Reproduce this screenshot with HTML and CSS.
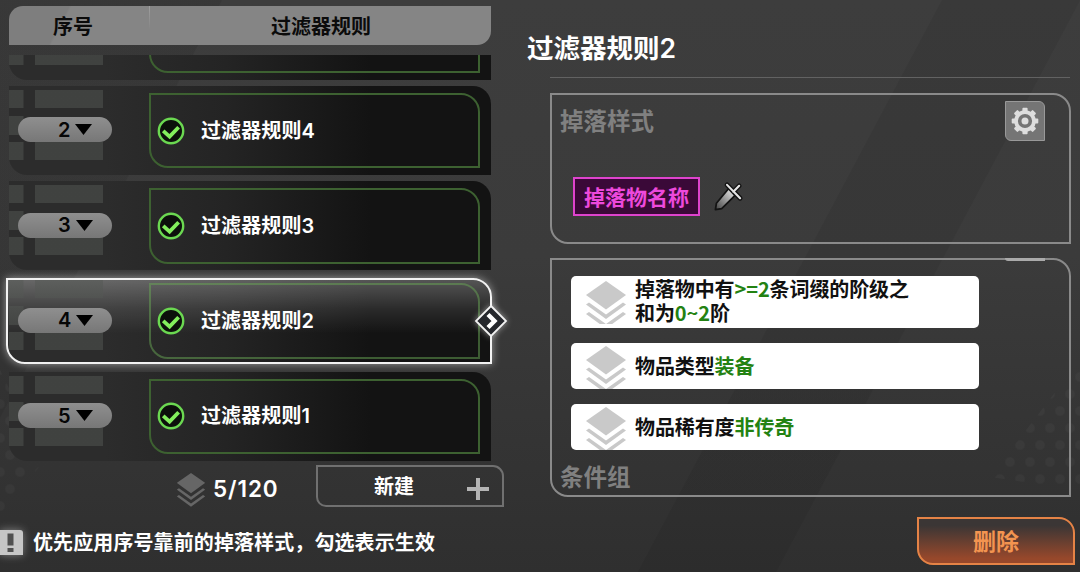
FILE: index.html
```html
<!DOCTYPE html>
<html lang="zh-CN">

<head>
  <meta charset="utf-8">
  <meta name="viewport" content="width=device-width, initial-scale=1.0">
  <title>过滤器规则</title>
  <link rel="stylesheet" href="styles.css">
</head>

<body>
  <svg class="defs" width="0" height="0">
    <symbol id="layers" viewBox="0 0 40 48" preserveAspectRatio="xMidYMin slice">
      <path d="M20 0L40 14L20 28.5L0 14Z" />
      <path d="M0 23.5L3 21.5L20 33.5L37 21.5L40 23.5L20 38Z" />
      <path d="M0 33L3 31L20 43L37 31L40 33L20 47.5Z" />
    </symbol>
    <symbol id="check" viewBox="0 0 28 28">
      <circle cx="14" cy="14" r="12.2" fill="#0c100b" stroke="#6bd851" stroke-width="2.4" />
      <path d="M6.2 13.8L12.6 19.6L21.6 10.2" fill="none" stroke="#82ee5c" stroke-width="3.8" />
    </symbol>
    <symbol id="down" viewBox="0 0 17 11">
      <path d="M0 0H17L8.5 11Z" />
    </symbol>
  </svg>
  <div class="dots dots_left"></div>
  <div class="dots dots_right"></div>

  <div id="rules">
    <div class="head">
      <div class="head_no">序号</div>
      <div class="head_name">过滤器规则</div>
    </div>
    <div class="list">
      <div class="row">
        <div class="order"></div>
        <div class="name"></div>
      </div>
      <div class="row">
        <div class="order"><div class="pill">2<svg class="down"><use href="#down" /></svg></div></div>
        <div class="name"><svg class="check"><use href="#check" /></svg>过滤器规则4</div>
      </div>
      <div class="row">
        <div class="order"><div class="pill">3<svg class="down"><use href="#down" /></svg></div></div>
        <div class="name"><svg class="check"><use href="#check" /></svg>过滤器规则3</div>
      </div>
      <div class="row selected">
        <div class="order"><div class="pill">4<svg class="down"><use href="#down" /></svg></div></div>
        <div class="name"><svg class="check"><use href="#check" /></svg>过滤器规则2</div>
        <svg class="arrow" viewBox="0 0 34 34">
          <path d="M17 2L32 17L17 32L2 17Z" fill="#25272c" stroke="#f2f2f2" stroke-width="1.8" />
          <path d="M14 10.5L20.5 17L14 23.5" fill="none" stroke="#fff" stroke-width="4.4" />
        </svg>
      </div>
      <div class="row">
        <div class="order"><div class="pill">5<svg class="down"><use href="#down" /></svg></div></div>
        <div class="name"><svg class="check"><use href="#check" /></svg>过滤器规则1</div>
      </div>
    </div>
    <div class="tools">
      <svg class="count_icon"><use href="#layers" /></svg>
      <span class="count">5/120</span>
      <div class="new">
        <span>新建</span>
        <svg width="22" height="22" viewBox="0 0 22 22"><path d="M9 0H13V9H22V13H13V22H9V13H0V9H9Z" fill="#b4b4b4" /></svg>
      </div>
    </div>
    <div class="note">
      <svg class="warn" viewBox="0 0 23 25">
        <path d="M0 0H20Q23 0 23 3V25H0Z" fill="#c6c6c6" />
        <path d="M7.5 3.5H13.5V15.5H7.5ZM7.5 18H13.5V22H7.5Z" fill="#505050" />
      </svg>
      <span>优先应用序号靠前的掉落样式，勾选表示生效</span>
    </div>
  </div>

  <div id="detail">
    <h1>过滤器规则2</h1>
    <div class="panel style_panel">
      <div class="panel_top">
        <h2>掉落样式</h2>
        <div class="gear">
          <svg width="28" height="28" viewBox="-14 -14 28 28">
            <g fill="#dedede">
              <rect id="tooth" x="-2.6" y="-13.3" width="5.2" height="26.6" rx="1" />
              <use href="#tooth" transform="rotate(45)" />
              <use href="#tooth" transform="rotate(90)" />
              <use href="#tooth" transform="rotate(135)" />
              <circle r="10.8" />
            </g>
            <circle r="5.3" fill="#dedede" stroke="#757575" stroke-width="3.6" />
          </svg>
        </div>
      </div>
      <div class="drop">
        <span class="tag">掉落物名称</span>
        <svg class="sword" viewBox="0 0 32 32">
          <defs>
            <linearGradient id="blade" x1="0" y1="1" x2="1" y2="0">
              <stop offset="0" stop-color="#404040" />
              <stop offset="0.5" stop-color="#9a9a9a" />
              <stop offset="1" stop-color="#f4f4f4" />
            </linearGradient>
          </defs>
          <path d="M14.5 4L28 17.8M21 11L27 5" stroke="#131313" stroke-width="5" stroke-linecap="round" />
          <path d="M2.5 29.5L3.5 23L16 8L22.5 15L9 28.5Z" fill="url(#blade)" stroke="#131313" stroke-width="1.8" stroke-linejoin="round" />
          <path d="M14.5 4L28 17.8M21 11L27 5" stroke="#e6e6e6" stroke-width="2.2" stroke-linecap="round" />
        </svg>
      </div>
    </div>
    <div class="panel cond_panel">
      <div class="cond tall">
        <svg class="cond_icon"><use href="#layers" /></svg>
        <p>掉落物中有<b>&gt;=2</b>条词缀的阶级之<br>和为<b>0~2</b>阶</p>
      </div>
      <div class="cond">
        <svg class="cond_icon"><use href="#layers" /></svg>
        <p>物品类型<b>装备</b></p>
      </div>
      <div class="cond">
        <svg class="cond_icon"><use href="#layers" /></svg>
        <p>物品稀有度<b>非传奇</b></p>
      </div>
      <h2>条件组</h2>
    </div>
    <div class="delete">删除</div>
  </div>
</body>

</html>
```

FILE: styles.css
```css
* {
  box-sizing: border-box;
}

body {
  margin: 0;
  display: flex;
  position: relative;
  width: 1080px;
  height: 572px;
  overflow: hidden;
  color: #fff;
  font-family: Inter, "Noto Sans CJK SC", sans-serif;
  font-size: 20px;
  font-weight: 600;
  line-height: 24px;
  background: linear-gradient(118deg, transparent 68%, rgba(0, 0, 0, 0.07) 68.1%, rgba(0, 0, 0, 0.07) 78%, transparent 78.1%), linear-gradient(118deg, rgba(0, 0, 0, 0.08) 16%, transparent 16.1%), linear-gradient(#3d3d3d, #3b3b3b 45%, #2f2f2f);
}

svg {
  display: block;
}

.defs {
  position: absolute;
}

h1, h2, p {
  margin: 0;
}

/* faint dotted corners */
.dots {
  position: absolute;
  background: radial-gradient(circle, rgba(255, 255, 255, 0.03) 4px, transparent 5.5px) 0 0 / 20px 34px, radial-gradient(circle, rgba(255, 255, 255, 0.03) 4px, transparent 5.5px) 10px 17px / 20px 34px;
}

.dots_left {
  left: 0;
  top: 370px;
  width: 44px;
  height: 150px;
  clip-path: polygon(0 0, 100% 60%, 0 100%);
}

.dots_right {
  left: 990px;
  top: 360px;
  width: 90px;
  height: 130px;
  clip-path: polygon(100% 0, 100% 100%, 0 90%);
}

#rules {
  position: relative;
  width: 527px;
  padding: 6px 0 0 9px;
}

.head {
  display: flex;
  align-items: center;
  width: 482px;
  height: 39px;
  border-radius: 14px 0 14px 0;
  background: linear-gradient(118deg, #7e7e7e 12%, #858585 12.5%);
  color: #0b0b0b;
}

.head_no {
  width: 140px;
  padding: 2px 0 0 44px;
}

.head_name {
  flex: 1;
  align-self: stretch;
  padding: 9px 0 0 121px;
  border-left: 1px solid;
  border-image: linear-gradient(#a0a0a0, #858585 60%) 1;
}

/* side padding leaves room for the glow of the selected row */
.list {
  display: flex;
  flex-direction: column;
  justify-content: flex-end;
  gap: 6px;
  width: 520px;
  height: 406px;
  margin: 10px 0 0 -9px;
  padding: 0 29px 0 9px;
  overflow: hidden;
}

.row {
  position: relative;
  display: flex;
  flex: none;
  width: 482px;
  height: 89.3px;
  border-radius: 0 18px 0 18px;
  background: linear-gradient(90deg, #2c2c2c 20%, #242424 45%, #131313 75%);
}

.order {
  --block: linear-gradient(rgba(84, 88, 84, 0.5), rgba(84, 88, 84, 0.5));
  position: relative;
  width: 140px;
  height: 76px;
  padding: 31.5px 0 0 9px;
  background: var(--block) 0 4px / 14.5px 18px no-repeat, var(--block) 0 30px / 14.5px 19px no-repeat, var(--block) 0 56px / 14.5px 18px no-repeat, var(--block) 26px 4px / 68px 18px no-repeat, var(--block) 26px 56px / 68px 18px no-repeat;
}

.pill {
  display: flex;
  align-items: center;
  gap: 5px;
  width: 94px;
  height: 25px;
  padding-left: 40px;
  border-radius: 13px;
  background: linear-gradient(#8f8f8f, #777);
  color: #060606;
}

.down {
  width: 17px;
  height: 11px;
}

.name {
  display: flex;
  align-items: center;
  width: 331px;
  height: 75.5px;
  margin-top: 7px;
  padding-left: 7px;
  border: 2px solid #3d6131;
  border-radius: 0 19px 0 19px;
  letter-spacing: 0.1px;
}

.check {
  width: 28px;
  height: 28px;
  margin-right: 16px;
  margin-left: -1px;
}

.selected {
  background: none;
}

.selected::before {
  content: "";
  position: absolute;
  top: 2px;
  bottom: 2px;
  left: -3px;
  right: -1px;
  border: 2px solid #f2f2f2;
  border-radius: 0 19px 0 19px;
  background: linear-gradient(rgba(255, 255, 255, 0.28), rgba(255, 255, 255, 0.1) 35%, transparent 65%), linear-gradient(90deg, #2c2c2c 20%, #242424 45%, #131313 75%);
  box-shadow: 0 0 9px rgba(255, 255, 255, 0.5);
}

.selected .name {
  position: relative;
  border-color: rgba(104, 165, 84, 0.5);
}

.arrow {
  position: absolute;
  right: -17px;
  top: 28px;
  width: 34px;
  height: 34px;
  filter: drop-shadow(0 0 3px rgba(255, 255, 255, 0.5));
}

.tools {
  display: flex;
  height: 42px;
  margin-top: 4px;
  padding-left: 168px;
}

.count_icon {
  width: 28px;
  height: 34px;
  margin-top: 8px;
  fill: #666;
}

.count {
  width: 103px;
  margin: 12px 0 0 8px;
  font-size: 22.5px;
  letter-spacing: 0.9px;
}

.new {
  display: flex;
  width: 188px;
  padding: 8px 13px 0 56px;
  justify-content: space-between;
  border: 2px solid #707070;
  border-radius: 0 11px 0 10px;
}

.new svg {
  margin-top: 3px;
}

.note {
  display: flex;
  align-items: center;
  margin: 23px 0 0 -9px;
  letter-spacing: 0.1px;
}

.warn {
  width: 23px;
  height: 25px;
  margin-right: 10px;
  filter: drop-shadow(0 0 4px rgba(255, 255, 255, 0.4));
}

#detail {
  position: relative;
  display: flex;
  flex-direction: column;
  width: 553px;
  padding-left: 23px;
}

h1 {
  width: 520px;
  height: 78px;
  padding: 32px 0 0;
  border-bottom: 1px solid #626262;
  font-size: 26.5px;
  font-weight: 600;
  line-height: 32px;
  text-indent: -23px;
}

h2 {
  color: #808080;
  font-size: 23.5px;
  font-weight: 600;
  line-height: 28px;
}

.panel {
  position: relative;
  width: 521px;
  border: 2px solid #8a8a8a;
  border-radius: 0 18px 0 18px;
}

.style_panel {
  height: 151px;
  margin-top: 15px;
  padding: 6px 24px 0 8px;
}

.panel_top {
  display: flex;
  justify-content: space-between;
}

.panel_top h2 {
  margin-top: 7px;
}

.gear {
  display: flex;
  align-items: center;
  justify-content: center;
  width: 40px;
  height: 40px;
  border: 1px solid #999;
  border-radius: 0 6px 0 6px;
  background: #757575;
}

.drop {
  display: flex;
  margin: 36px 0 0 13px;
}

.tag {
  width: 127px;
  height: 39px;
  border: 2px solid #de43cd;
  background: #3a0938;
  color: #ed49dc;
  font-size: 21px;
  line-height: 37px;
  text-align: center;
}

.sword {
  width: 31px;
  height: 31px;
  margin: 4px 0 0 13px;
}

.cond_panel {
  display: flex;
  flex-direction: column;
  gap: 15px;
  height: 239px;
  margin-top: 14px;
  padding: 16px 0 0 19px;
}

/* bottom edge of the next button, scrolled under the frame */
.cond_panel::before {
  content: "";
  position: absolute;
  top: -2px;
  right: 24px;
  width: 40px;
  height: 3px;
  border-radius: 0 0 0 3px;
  background: #aaa;
}

.cond {
  display: flex;
  align-items: center;
  width: 408px;
  height: 46px;
  border-radius: 5px;
  background: #fff;
  color: #111;
  font-family: "Noto Sans CJK SC", sans-serif;
  letter-spacing: -0.1px;
}

.tall {
  height: 52px;
}

.tall p {
  margin-top: -2px;
}

.cond_icon {
  align-self: flex-end;
  width: 40px;
  height: 43px;
  margin: 0 9px 0 15px;
  fill: #c9c9c9;
}

.tall .cond_icon {
  margin-bottom: 4px;
}

.cond b {
  color: #238212;
  font-weight: inherit;
}

.cond_panel h2 {
  margin: -1px 0 0 -11px;
}

.delete {
  align-self: flex-end;
  width: 158px;
  height: 48px;
  margin: 20px 5px 0 0;
  border: 2px solid #e58346;
  border-radius: 0 16px 0 16px;
  background: linear-gradient(#3b3635 15%, #97482b 90%);
  color: #f39450;
  font-size: 23px;
  line-height: 46px;
  text-align: center;
}
```
